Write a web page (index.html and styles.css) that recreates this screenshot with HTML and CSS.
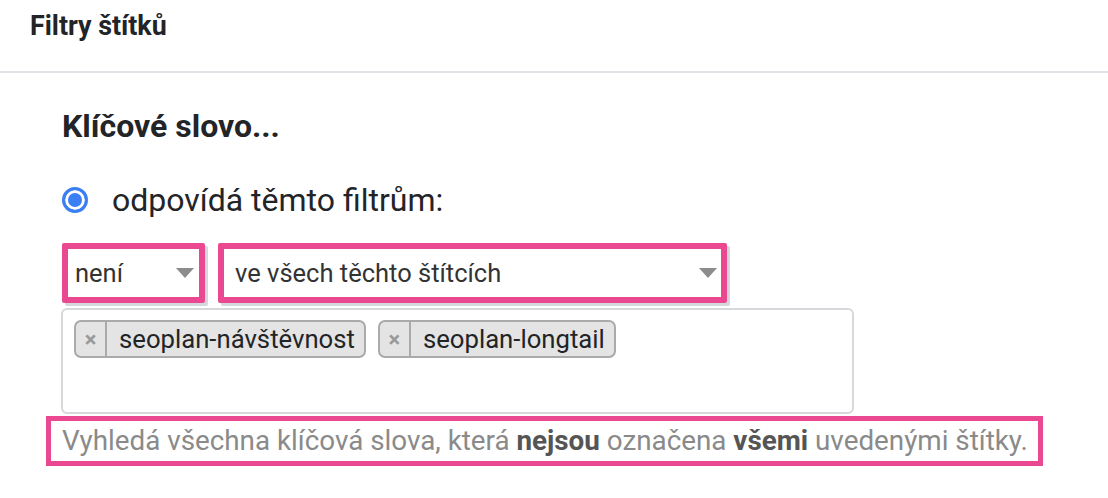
FILE: index.html
```html
<!DOCTYPE html>
<html lang="cs">
<head>
<meta charset="utf-8">
<title>Filtry štítků</title>
<link rel="stylesheet" href="styles.css">
</head>
<body>
<div class="header">Filtry štítků</div>
<div class="content">
  <h2 class="heading">Klíčové slovo...</h2>
  <label class="radio-row">
    <span class="radio"></span>
    <span class="radio-label">odpovídá těmto filtrům:</span>
  </label>
  <div class="selects">
    <div class="select select-small">
      <span class="select-text">není</span>
      <span class="arrow"></span>
    </div>
    <div class="select select-wide">
      <span class="select-text">ve všech těchto štítcích</span>
      <span class="arrow"></span>
    </div>
  </div>
  <div class="tags-box">
    <span class="tag"><span class="tag-x">×</span><span class="tag-label">seoplan-návštěvnost</span></span>
    <span class="tag"><span class="tag-x">×</span><span class="tag-label">seoplan-longtail</span></span>
  </div>
  <div class="help">Vyhledá všechna klíčová slova, která <b>nejsou</b> označena <b>všemi</b> uvedenými štítky.</div>
</div>
</body>
</html>
```

FILE: styles.css
```css
* { box-sizing: border-box; }
body {
  margin: 0;
  font-family: Roboto, "Liberation Sans", sans-serif;
  background: #fff;
  color: #222428;
}
.header {
  height: 73px;
  padding: 10px 0 0 30px;
  font-size: 26.8px;
  line-height: 32px;
  font-weight: 700;
  border-bottom: 2px solid #dfe2e6;
}
.content {
  padding-left: 62px;
}
.heading {
  margin: 34px 0 0 0;
  font-size: 32px;
  line-height: 38px;
  font-weight: 700;
}
.radio-row {
  display: flex;
  align-items: center;
  gap: 24px;
  margin-top: 35px;
  height: 40px;
}
.radio {
  width: 26px;
  height: 26px;
  flex: none;
  border-radius: 50%;
  border: 3px solid #3b7ff5;
  background: #3b7ff5;
  box-shadow: inset 0 0 0 3px #fff;
}
.radio-label {
  font-size: 32px;
  line-height: 40px;
  color: #222428;
}
.selects {
  display: flex;
  gap: 13px;
  margin-top: 23px;
}
.select {
  display: flex;
  align-items: center;
  justify-content: space-between;
  height: 60px;
  border: 6px solid #ea4890;
  border-radius: 2px;
  box-shadow: 3px 3px 0 0 #d4d7db;
  padding: 0 5px 0 7px;
}
.select-small { width: 143px; }
.select-wide { width: 509px; padding-left: 11px; padding-right: 4px; }
.select-text {
  font-size: 25.5px;
  color: #333;
}
.arrow {
  width: 0;
  height: 0;
  border-left: 9px solid transparent;
  border-right: 9px solid transparent;
  border-top: 10px solid #8c8c8c;
}
.tags-box {
  width: 793px;
  height: 106px;
  margin-top: 5px;
  margin-left: -1px;
  border: 2px solid #d6d8dc;
  border-radius: 6px;
  padding: 10px 11px;
  display: flex;
  align-items: flex-start;
  gap: 12px;
}
.tag {
  display: flex;
  height: 38px;
  background: #e4e4e4;
  border: 2px solid #aaa;
  border-radius: 7px;
  align-items: stretch;
}
.tag-x {
  width: 31px;
  display: flex;
  align-items: center;
  justify-content: center;
  border-right: 2px solid #aaa;
  color: #999;
  font-weight: 700;
  font-size: 22px;
}
.tag-label {
  display: flex;
  align-items: center;
  padding: 0 9px 0 12px;
  font-size: 25.7px;
  color: #222428;
}
.help {
  display: inline-block;
  margin: 2px 0 0 -16px;
  height: 50px;
  border: 5px solid #ea4890;
  padding: 0 10px 0 11px;
  font-size: 27.8px;
  line-height: 40px;
  color: #8a8a8a;
}
.help b {
  color: #555;
  font-weight: 700;
}
```
